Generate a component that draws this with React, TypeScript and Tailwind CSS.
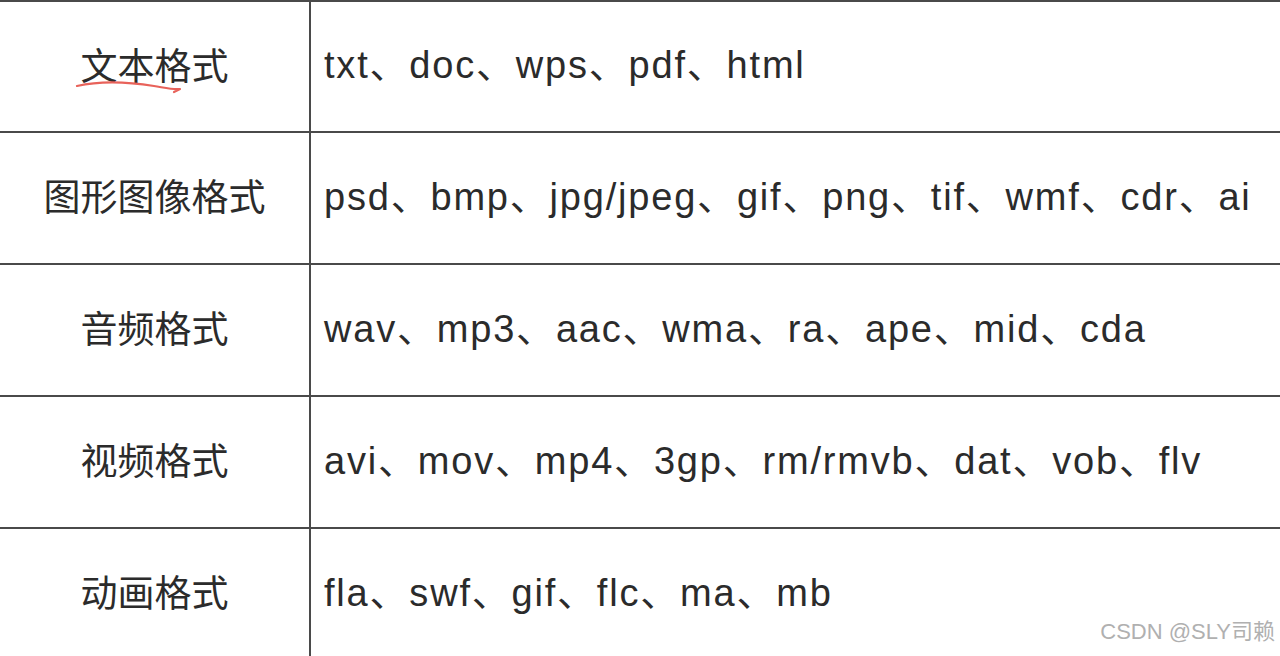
const rows = [
  { label: "文本格式", value: "txt、doc、wps、pdf、html" },
  { label: "图形图像格式", value: "psd、bmp、jpg/jpeg、gif、png、tif、wmf、cdr、ai" },
  { label: "音频格式", value: "wav、mp3、aac、wma、ra、ape、mid、cda" },
  { label: "视频格式", value: "avi、mov、mp4、3gp、rm/rmvb、dat、vob、flv" },
  { label: "动画格式", value: "fla、swf、gif、flc、ma、mb" },
];

export default function App() {
  return (
    <div
      className="relative h-[656px] w-[1280px] overflow-hidden bg-white text-[#2b2b2b]"
      style={{ fontFamily: '"Liberation Sans", "Noto Sans CJK SC", sans-serif' }}
    >
      <div className="border-t-2 border-[#4a4a4a]">
        {rows.map((row, i) => (
          <div
            key={i}
            className={`flex border-b-2 border-[#4a4a4a] ${i === 0 ? "h-[131px]" : "h-[132px]"}`}
          >
            <div className="relative flex w-[311px] shrink-0 items-center justify-center border-r-2 border-[#4a4a4a] pb-[5px]">
              <span className="text-[37px] leading-none" style={{ fontFamily: '"Noto Sans CJK SC", sans-serif' }}>
                {row.label}
              </span>
              {i === 0 && (
                <svg
                  className="absolute left-[74px] top-[78px]"
                  width="114"
                  height="16"
                  viewBox="0 0 114 16"
                  fill="none"
                >
                  <path
                    d="M3 6 C 25 1, 55 2, 80 6 C 92 8, 100 10, 106 9 L 100 12"
                    stroke="#e8625a"
                    strokeWidth="2.2"
                    strokeLinecap="round"
                    strokeLinejoin="round"
                  />
                </svg>
              )}
            </div>
            <div className="flex flex-1 items-center pb-[3px] pl-[13px] text-[38px] leading-none tracking-[1.8px]">
              {row.value}
            </div>
          </div>
        ))}
      </div>
      <div className="absolute bottom-[8px] right-[5px] text-[22px] text-[#b0b0b0]">
        CSDN @SLY司赖
      </div>
    </div>
  );
}
